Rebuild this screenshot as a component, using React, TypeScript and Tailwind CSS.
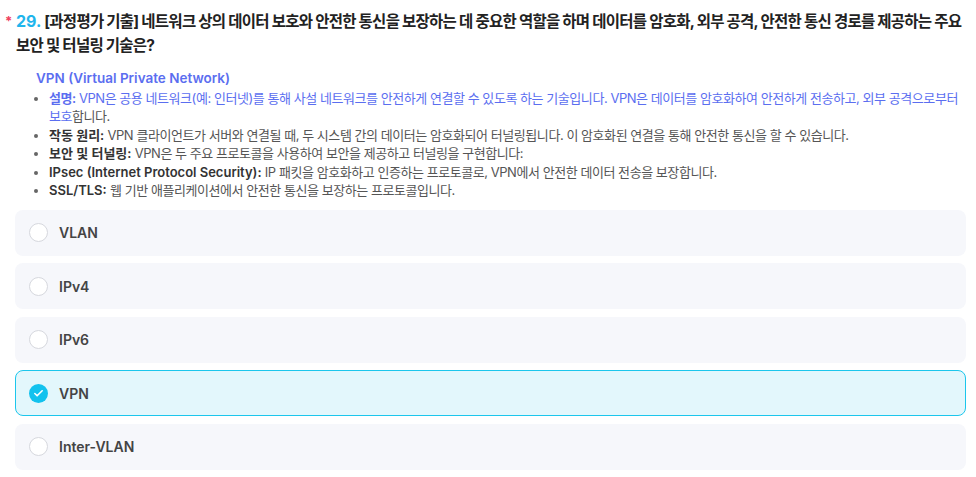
import { Check } from 'lucide-react'

const OPTIONS = ['VLAN', 'IPv4', 'IPv6', 'VPN', 'Inter-VLAN']
const SELECTED = 'VPN'

const POINTS = [
  { label: '작동 원리:', text: ' VPN 클라이언트가 서버와 연결될 때, 두 시스템 간의 데이터는 암호화되어 터널링됩니다. 이 암호화된 연결을 통해 안전한 통신을 할 수 있습니다.' },
  { label: '보안 및 터널링:', text: ' VPN은 두 주요 프로토콜을 사용하여 보안을 제공하고 터널링을 구현합니다:' },
  { label: 'IPsec (Internet Protocol Security):', text: ' IP 패킷을 암호화하고 인증하는 프로토콜로, VPN에서 안전한 데이터 전송을 보장합니다.' },
  { label: 'SSL/TLS:', text: ' 웹 기반 애플리케이션에서 안전한 통신을 보장하는 프로토콜입니다.' },
]

export default function App() {
  return (
    <div
      className="min-h-screen bg-white pl-[5px] pr-[10px] pt-[9px]"
      style={{ fontFamily: 'Inter, "Noto Sans CJK KR", sans-serif' }}
    >
      <h2 className="flex break-keep text-[15.5px] font-bold leading-[24px] tracking-[-0.75px] text-[#222]">
        <span className="w-[11px] flex-shrink-0 text-[13px] text-[#f03e5e]">*</span>
        <span>
          <span className="text-[16px] tracking-normal text-[#1fb5ec]">29.</span> [과정평가 기출] 네트워크 상의 데이터 보호와 안전한 통신을 보장하는 데 중요한 역할을 하며 데이터를 암호화, 외부 공격, 안전한 통신 경로를 제공하는 주요 보안 및 터널링 기술은?
        </span>
      </h2>

      <div className="break-keep pl-[31px] pt-[11px] text-[13px] leading-[18.5px] tracking-[-0.45px]">
        <p className="text-[13.5px] font-semibold tracking-normal text-[#5b6ef0]">VPN (Virtual Private Network)</p>
        <ul className="mt-[1px] list-disc pl-[13px] text-[#555] marker:text-[#666]">
          <li>
            <span className="text-[#5b6ef0]">
              <b className="font-semibold">설명:</b> VPN은 공용 네트워크(예: 인터넷)를 통해 사설 네트워크를 안전하게 연결할 수 있도록 하는 기술입니다. VPN은 데이터를 암호화하여 안전하게 전송하고, 외부 공격으로부터 보호
            </span>
            합니다.
          </li>
          {POINTS.map((p) => (
            <li key={p.label}>
              <b className="font-semibold tracking-normal text-[#333]">{p.label}</b>
              {p.text}
            </li>
          ))}
        </ul>
      </div>

      <div className="mt-[10px] ml-[10px] flex flex-col gap-[7.5px]">
        {OPTIONS.map((opt) => {
          const on = opt === SELECTED
          return (
            <div
              key={opt}
              className={`flex h-[46px] items-center gap-[11px] rounded-[8px] px-[13px] ${
                on ? 'border border-[#1cc6ec] bg-[#e3f7fc]' : 'border border-transparent bg-[#f6f7fb]'
              }`}
            >
              {on ? (
                <span className="flex h-[19px] w-[19px] items-center justify-center rounded-full bg-[#12c2ee]">
                  <Check size={11} strokeWidth={3.5} className="text-white" />
                </span>
              ) : (
                <span className="h-[19px] w-[19px] rounded-full border border-[#d6d8de] bg-white" />
              )}
              <span className="text-[14px] font-semibold text-[#444]">{opt}</span>
            </div>
          )
        })}
      </div>
    </div>
  )
}
